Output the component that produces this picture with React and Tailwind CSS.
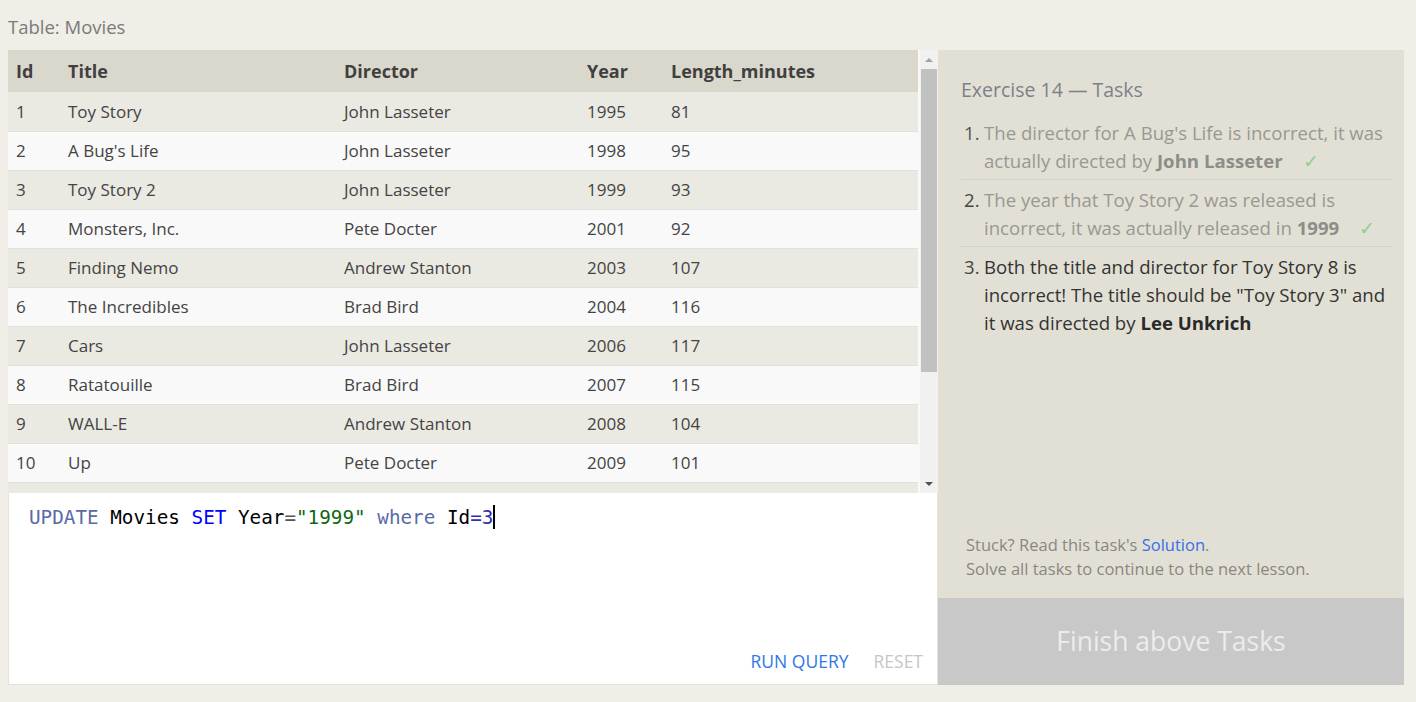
import React from "react";

const movies = [
  [1, "Toy Story", "John Lasseter", 1995, 81],
  [2, "A Bug's Life", "John Lasseter", 1998, 95],
  [3, "Toy Story 2", "John Lasseter", 1999, 93],
  [4, "Monsters, Inc.", "Pete Docter", 2001, 92],
  [5, "Finding Nemo", "Andrew Stanton", 2003, 107],
  [6, "The Incredibles", "Brad Bird", 2004, 116],
  [7, "Cars", "John Lasseter", 2006, 117],
  [8, "Ratatouille", "Brad Bird", 2007, 115],
  [9, "WALL-E", "Andrew Stanton", 2008, 104],
  [10, "Up", "Pete Docter", 2009, 101],
];

const font = { fontFamily: '"Open Sans", "Noto Sans", sans-serif' };

const Check = () => <span className="ml-5 text-[#8fd08f] font-normal">✓</span>;

export default function App() {
  return (
    <div className="w-[1416px] h-[702px] bg-[#f0eee6] overflow-hidden text-[#444]" style={font}>
      <div className="pl-2 pt-[13px] h-[50px] text-[18.5px] text-[#7a7a7a]">Table: Movies</div>
      <div className="flex ml-2 mr-3">
        {/* left side */}
        <div className="w-[930px] flex flex-col">
          <div className="flex h-[443px] bg-[#f9f9f9]">
            <div className="flex-1 overflow-hidden">
              <table className="w-[910px] table-fixed border-collapse">
                <colgroup>
                  <col className="w-[52px]" />
                  <col className="w-[276px]" />
                  <col className="w-[243px]" />
                  <col className="w-[84px]" />
                  <col />
                </colgroup>
                <thead>
                  <tr className="h-[42px] bg-[#dad8cc] text-[18px] font-bold text-[#404040]">
                    <th className="text-left pl-2 font-bold">Id</th>
                    <th className="text-left pl-2 font-bold">Title</th>
                    <th className="text-left pl-2 font-bold">Director</th>
                    <th className="text-left pl-2 font-bold">Year</th>
                    <th className="text-left pl-2 font-bold">Length_minutes</th>
                  </tr>
                </thead>
                <tbody>
                  {movies.map((m, i) => (
                    <tr
                      key={m[0]}
                      className={`h-[39px] text-[17px] border-b border-[#e2e2dc] ${i % 2 === 0 ? "bg-[#eae9e2]" : "bg-[#f9f9f9]"}`}
                    >
                      {m.map((c, j) => (
                        <td key={j} className="pl-2 whitespace-nowrap">{c}</td>
                      ))}
                    </tr>
                  ))}
                  <tr className="h-[39px] bg-[#eae9e2]">
                    <td colSpan={5} />
                  </tr>
                </tbody>
              </table>
            </div>
            {/* scrollbar */}
            <div className="w-[18px] bg-[#f1f1f1] flex flex-col items-center">
              <div className="h-[19px] flex items-center justify-center">
                <div className="w-0 h-0 border-l-[4px] border-r-[4px] border-b-[4px] border-l-transparent border-r-transparent border-b-[#a3a3a3]" />
              </div>
              <div className="w-[16px] h-[303px] bg-[#c1c1c1]" />
              <div className="flex-1" />
              <div className="h-[19px] flex items-center justify-center">
                <div className="w-0 h-0 border-l-[4px] border-r-[4px] border-t-[4px] border-l-transparent border-r-transparent border-t-[#505050]" />
              </div>
            </div>
          </div>
          {/* editor */}
          <div className="h-[192px] bg-white border border-[#e4e2da] border-t-0 flex flex-col">
            <div className="pl-5 pt-[11px] text-[19.3px] text-black" style={{ fontFamily: '"DejaVu Sans Mono", "Liberation Mono", monospace' }}>
              <span className="text-[#5a6aa6]">UPDATE</span> Movies <span className="text-[#0000ff]">SET</span> Year<span className="text-[#555]">=</span>
              <span className="text-[#116611]">"1999"</span> <span className="text-[#5a6aa6]">where</span> Id<span className="text-[#3030b0]">=3</span>
              <span className="inline-block w-[2px] h-[24px] bg-black align-middle -mt-1" />
            </div>
            <div className="flex-1" />
            <div className="flex justify-end gap-[25px] pr-[14px] pb-[10px] text-[17.5px]">
              <span className="text-[#2f77e8]">RUN QUERY</span>
              <span className="text-[#c6c6c6]">RESET</span>
            </div>
          </div>
        </div>
        {/* right side */}
        <div className="flex-1 flex flex-col">
          <div className="h-[548px] bg-[#e2e0d5] flex flex-col pl-[23px] pr-[11px]">
            <div className="pt-[25px] text-[19.5px] text-[#7d808a]">Exercise 14 — Tasks</div>
            <ol className="mt-[15px] text-[18.6px] leading-[28px]">
              <li className="flex pb-[4px] border-b border-[#d4d2c8]">
                <span className="w-[23px] shrink-0 text-[#555] pl-[3px]">1.</span>
                <span className="text-[#999893]">
                  The director for A Bug's Life is incorrect, it was actually directed by{" "}
                  <b className="text-[#8e8d88]">John Lasseter</b>
                  <Check />
                </span>
              </li>
              <li className="flex pt-[6px] pb-[4px] border-b border-[#d4d2c8]">
                <span className="w-[23px] shrink-0 text-[#444] pl-[3px]">2.</span>
                <span className="text-[#999893]">
                  The year that Toy Story 2 was released is incorrect, it was actually released in{" "}
                  <b className="text-[#8e8d88]">1999</b>
                  <Check />
                </span>
              </li>
              <li className="flex pt-[6px]">
                <span className="w-[23px] shrink-0 text-[#444] pl-[3px]">3.</span>
                <span className="text-[#333]">
                  Both the title and director for Toy Story 8 is incorrect! The title should be "Toy Story 3" and it was directed by{" "}
                  <b className="text-[#2a2a2a]">Lee Unkrich</b>
                </span>
              </li>
            </ol>
            <div className="flex-1" />
            <div className="pl-[5px] pb-[17px] text-[16.5px] leading-[24px] text-[#8b8680]">
              <div>
                Stuck? Read this task's <span className="text-[#3a6ee6]">Solution</span>.
              </div>
              <div>Solve all tasks to continue to the next lesson.</div>
            </div>
          </div>
          <div className="h-[87px] bg-[#c8c8c8] flex items-center justify-center text-[26.5px] text-[#ececec]">
            Finish above Tasks
          </div>
        </div>
      </div>
    </div>
  );
}
